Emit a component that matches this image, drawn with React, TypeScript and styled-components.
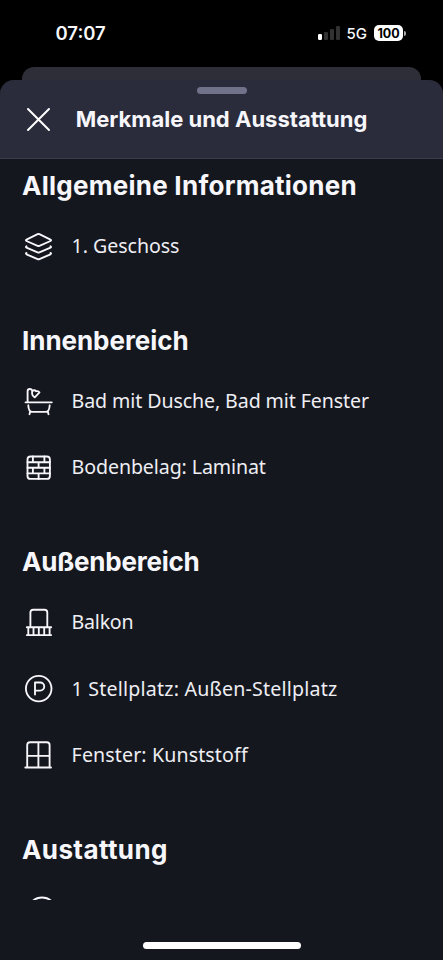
import React from "react";
import styled, { createGlobalStyle } from "styled-components";

const Global = createGlobalStyle`
  * { box-sizing: border-box; }
  html, body { margin: 0; background: #000; }
`;

const Screen = styled.div`
  width: 443px;
  height: 960px;
  display: flex;
  flex-direction: column;
  overflow: hidden;
  background: #000;
  color: #f7f7fb;
  font-family: "Noto Sans", sans-serif;
`;

const StatusBar = styled.div`
  height: 67px;
  flex: none;
  display: flex;
  justify-content: space-between;
  align-items: center;
  padding: 0 37px 0 55.5px;
  font-family: Inter, sans-serif;
`;

const Clock = styled.span`
  padding-bottom: 2px;
  font-size: 18.5px;
  font-weight: 600;
`;

const StatusIcons = styled.div`
  display: flex;
  align-items: center;
  height: 16px;
  margin-bottom: 1px;
`;

const SignalBars = styled.div`
  display: flex;
  align-items: flex-end;
  gap: 2px;
  height: 14px;
`;

const SignalBar = styled.span<{ $height: number; $on?: boolean }>`
  width: 4px;
  height: ${(p) => p.$height}px;
  border-radius: 1.2px;
  background: ${(p) => (p.$on ? "#fff" : "#323232")};
`;

const Network = styled.span`
  font-size: 15px;
  font-weight: 500;
  margin: 0 7px;
`;

const Battery = styled.span`
  width: 29px;
  height: 16px;
  border-radius: 5px;
  background: #fff;
  color: #000;
  font-size: 12.5px;
  font-weight: 700;
  line-height: 17px;
  text-align: center;
`;

const BatteryTip = styled.span`
  width: 2px;
  height: 5px;
  margin-left: 1px;
  border-radius: 0 2px 2px 0;
  background: #aaa;
`;

const BackCard = styled.div`
  flex: none;
  height: 27px;
  margin: 0 22px -14px;
  border-radius: 12px 12px 0 0;
  background: #2e2e38;
`;

const Sheet = styled.div`
  flex: 1;
  min-height: 0;
  display: flex;
  flex-direction: column;
  border-radius: 14px 14px 0 0;
  overflow: hidden;
  background: #15171f;
`;

const Header = styled.header`
  flex: none;
  height: 79px;
  background: #2a2c3b;
  border-bottom: 1px solid #3a3c4c;
`;

const Grabber = styled.div`
  width: 50px;
  height: 7px;
  margin: 7px auto 0;
  border-radius: 4px;
  background: #70728a;
`;

const TitleRow = styled.div`
  height: 50px;
  display: flex;
  align-items: center;
  padding-left: 26px;
`;

const CloseButton = styled.button`
  display: flex;
  padding: 0;
  border: 0;
  background: none;
`;

const Title = styled.h1`
  margin: 0 0 0 24.7px;
  font-family: Inter, sans-serif;
  font-size: 22px;
  line-height: 30px;
  font-weight: 700;
  white-space: nowrap;
`;

const Content = styled.main`
  flex: none;
  height: 741px;
  overflow: hidden;
  padding: 7px 22px 0;
`;

const Section = styled.section`
  margin-bottom: 41.5px;
`;

const Heading = styled.h2<{ $spacing: number }>`
  margin: 0 0 7px;
  font-family: Inter, sans-serif;
  font-size: 26px;
  line-height: 40px;
  font-weight: 700;
  white-space: nowrap;
  letter-spacing: ${(p) => p.$spacing}px;
`;

const Item = styled.div`
  height: 66.4px;
  display: flex;
  align-items: center;
  gap: 16.6px;
`;

const Label = styled.span<{ $spacing: number }>`
  font-size: 19.6px;
  font-weight: 400;
  line-height: 28px;
  color: #eeeef3;
  white-space: nowrap;
  letter-spacing: ${(p) => p.$spacing}px;
`;

const HomeArea = styled.footer`
  flex: 1;
  display: flex;
  justify-content: center;
  align-items: flex-end;
  padding-bottom: 11px;
`;

const HomeIndicator = styled.div`
  width: 158px;
  height: 7px;
  border-radius: 4px;
  background: #fff;
`;

const Glyph = styled.svg`
  flex: none;
  display: block;
  fill: none;
  stroke: #f7f7fb;
  stroke-width: 1.85;
  stroke-linecap: round;
  stroke-linejoin: round;
`;

const CloseGlyph = styled(Glyph)`
  stroke: #fff;
  stroke-width: 2;
`;

const icons = {
  layers: (
    <path d="M15.6 4.2q.9-.4 1.800 0L28.500 9.600q1.200.7 0 1.400L17.400 15.800q-.9.4-1.800 0L4.500 11q-1.200-.7 0-1.400ZM4.500 16.200q-1.200.7 0 1.400L15.600 22.400q.9.400 1.800 0L28.500 17.600q1.200-.7 0-1.400M4.500 22.900q-1.200.7 0 1.400L15.600 29.100q.9.400 1.800 0L28.500 24.300q1.200-.7 0-1.400" />
  ),
  bath: (
    <>
      <path d="M3.500 17.300H29.800M5.600 17.300V6.300Q5.600 4 7.900 4Q9.500 4 10.300 5.500" />
      <path d="M10.200 6.300Q12 4.200 14.200 6.200Q16.600 5.800 17.500 7.400L12.800 12.400Q9.300 10.500 10.200 6.300Z" />
      <path d="M6.300 20.300Q6.500 26.800 10 26.800H24Q27.300 26.800 27.700 20.300M8.200 26.600 7.500 29.200M25.800 26.600 26.500 29.200" />
    </>
  ),
  bricks: (
    <>
      <rect x="5.500" y="5.500" width="22.400" height="22.400" rx="3" />
      <path d="M5.500 11.200H28M5.500 16.700H28M5.500 22.300H28M10.900 5.500V11.200M22.400 5.500V11.200M16.600 11.200V16.700M10.900 16.700V22.300M22.400 16.700V22.300M16.600 22.300V28" />
    </>
  ),
  balcony: (
    <path d="M8.400 21V6.500Q8.400 3.700 11.200 3.700H22.500Q25.300 3.700 25.300 6.500V21M4.800 21.200H29.200M4.800 29.100H29.200M6.300 21.200V29.100M11.500 21.200V29.100M16.800 21.200V29.100M22.200 21.200V29.100M27.600 21.200V29.100" />
  ),
  parking: (
    <>
      <circle cx="16.700" cy="16.600" r="12.800" />
      <path d="M13 22.600V10.500H18.200A3.900 3.900 0 0 1 18.200 18.600H13" />
    </>
  ),
  window: (
    <path d="M5.200 28.500V6Q5.200 3.200 8 3.200H24.800Q27.600 3.200 27.600 6V28.500M3.300 28.500H29M16.400 3.200V28.500M5.200 16.900H27.600" />
  ),
  disc: <circle cx="20" cy="18" r="14.500" />,
};

type Feature = { icon: keyof typeof icons; label?: string; spacing?: number };

const sections: { title: string; spacing: number; items: Feature[] }[] = [
  {
    title: "Allgemeine Informationen",
    spacing: 0.26,
    items: [{ icon: "layers", label: "1. Geschoss", spacing: -0.05 }],
  },
  {
    title: "Innenbereich",
    spacing: -0.05,
    items: [
      { icon: "bath", label: "Bad mit Dusche, Bad mit Fenster", spacing: -0.1 },
      { icon: "bricks", label: "Bodenbelag: Laminat", spacing: -0.1 },
    ],
  },
  {
    title: "Außenbereich",
    spacing: -0.22,
    items: [
      { icon: "balcony", label: "Balkon", spacing: -0.25 },
      { icon: "parking", label: "1 Stellplatz: Außen-Stellplatz", spacing: 0.2 },
      { icon: "window", label: "Fenster: Kunststoff", spacing: 0.12 },
    ],
  },
  { title: "Austattung", spacing: 0.4, items: [{ icon: "disc" }] },
];

export default function App() {
  return (
    <>
      <Global />
      <Screen>
        <StatusBar>
          <Clock>07:07</Clock>
          <StatusIcons>
            <SignalBars>
              <SignalBar $height={6} $on />
              <SignalBar $height={8} />
              <SignalBar $height={11} />
              <SignalBar $height={14} />
            </SignalBars>
            <Network>5G</Network>
            <Battery>100</Battery>
            <BatteryTip />
          </StatusIcons>
        </StatusBar>
        <BackCard />
        <Sheet>
          <Header>
            <Grabber />
            <TitleRow>
              <CloseButton aria-label="Schließen">
                <CloseGlyph width="25" height="25">
                  <path d="M2 2 23 23M23 2 2 23" />
                </CloseGlyph>
              </CloseButton>
              <Title>Merkmale und Ausstattung</Title>
            </TitleRow>
          </Header>
          <Content>
            {sections.map((section) => (
              <Section key={section.title}>
                <Heading $spacing={section.spacing}>{section.title}</Heading>
                {section.items.map((item) => (
                  <Item key={item.icon}>
                    <Glyph width="33" height="33">
                      {icons[item.icon]}
                    </Glyph>
                    {item.label && <Label $spacing={item.spacing ?? 0}>{item.label}</Label>}
                  </Item>
                ))}
              </Section>
            ))}
          </Content>
          <HomeArea>
            <HomeIndicator />
          </HomeArea>
        </Sheet>
      </Screen>
    </>
  );
}
